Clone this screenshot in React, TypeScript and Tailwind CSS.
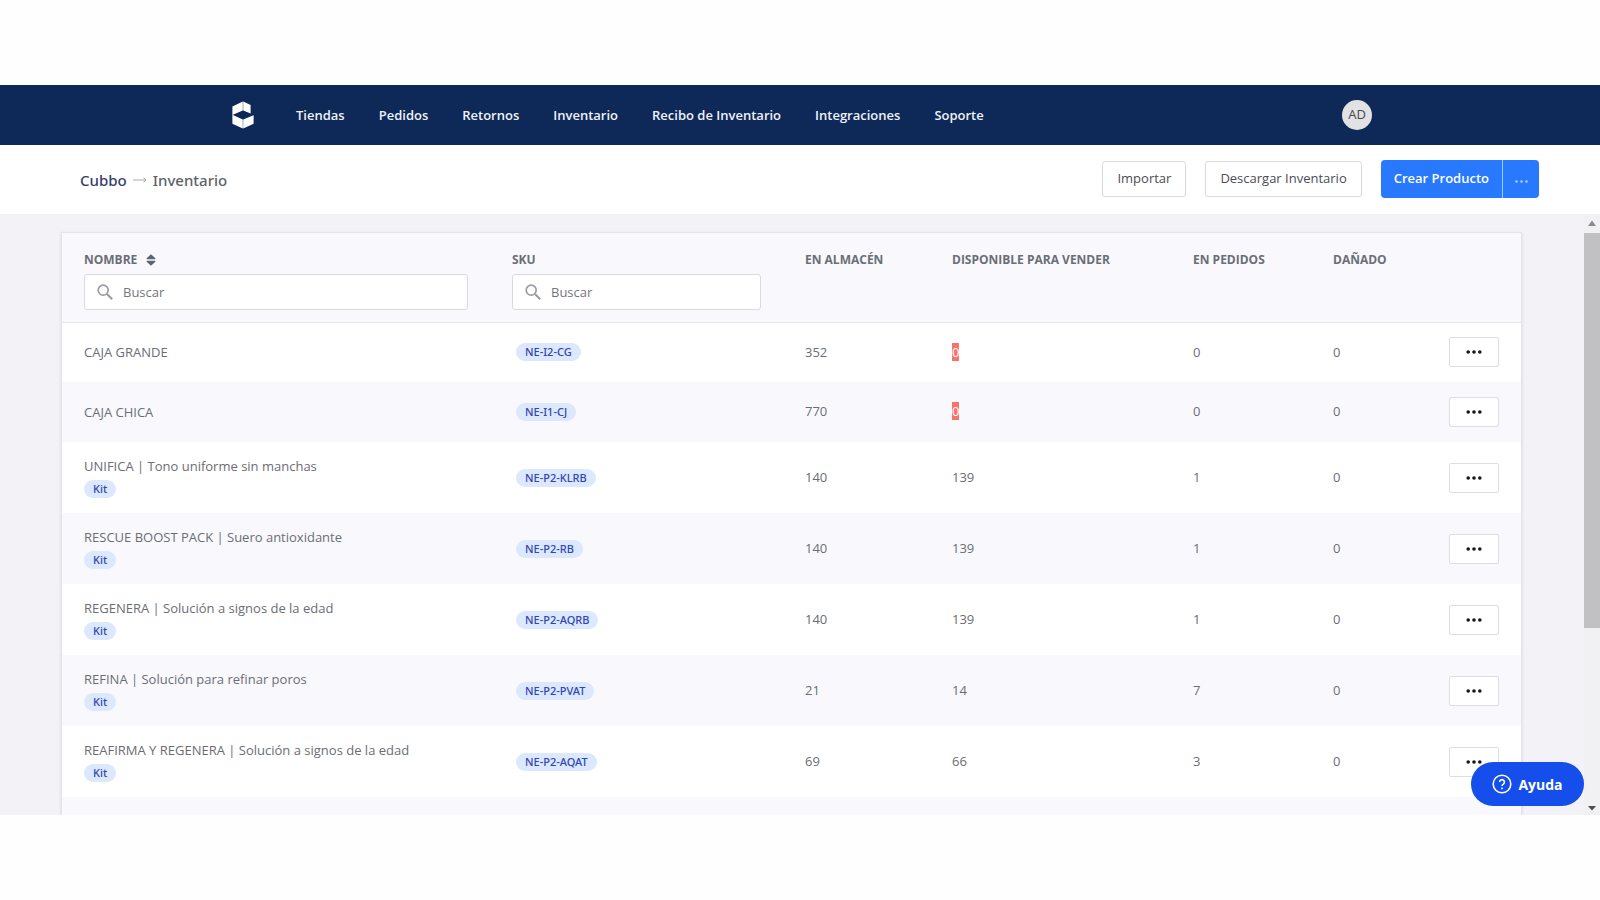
import { useState } from "react";

type Product = {
  name: string;
  kit?: boolean;
  sku: string;
  stock: number;
  available: number;
  orders: number;
  damaged: number;
};

const NAV = [
  "Tiendas",
  "Pedidos",
  "Retornos",
  "Inventario",
  "Recibo de Inventario",
  "Integraciones",
  "Soporte",
];

const PRODUCTS: Product[] = [
  { name: "CAJA GRANDE", sku: "NE-I2-CG", stock: 352, available: 0, orders: 0, damaged: 0 },
  { name: "CAJA CHICA", sku: "NE-I1-CJ", stock: 770, available: 0, orders: 0, damaged: 0 },
  { name: "UNIFICA | Tono uniforme sin manchas", kit: true, sku: "NE-P2-KLRB", stock: 140, available: 139, orders: 1, damaged: 0 },
  { name: "RESCUE BOOST PACK | Suero antioxidante", kit: true, sku: "NE-P2-RB", stock: 140, available: 139, orders: 1, damaged: 0 },
  { name: "REGENERA | Solución a signos de la edad", kit: true, sku: "NE-P2-AQRB", stock: 140, available: 139, orders: 1, damaged: 0 },
  { name: "REFINA | Solución para refinar poros", kit: true, sku: "NE-P2-PVAT", stock: 21, available: 14, orders: 7, damaged: 0 },
  { name: "REAFIRMA Y REGENERA | Solución a signos de la edad", kit: true, sku: "NE-P2-AQAT", stock: 69, available: 66, orders: 3, damaged: 0 },
];

function Logo() {
  return (
    <svg viewBox="0 0 22 28" className="h-7 w-[22px]" fill="#fff" aria-hidden="true">
      <path d="M10.8 0.4v9L0.4 14V5.4z" />
      <path d="M11.2 0.4 18.6 4v8.6L11.2 9.4z" />
      <path d="M0.4 13.8 10.8 18.6v9L0.4 22.8z" />
      <path d="M11.2 18.6 21.6 14.2v8.6l-10.4 4.8z" />
    </svg>
  );
}

function SortIcon() {
  return (
    <svg viewBox="0 0 10 12" className="h-3 w-[10px]" fill="#5f6570" aria-hidden="true">
      <path d="M5 0.3 9.4 4.3q.4.9-.6.9H1.2q-1 0-.6-.9z" />
      <path d="M5 11.7 9.4 7.7q.4-.9-.6-.9H1.2q-1 0-.6.9z" />
    </svg>
  );
}

function SearchField({ label }: { label: string }) {
  const [value, setValue] = useState("");
  return (
    <label className="flex h-9 items-center gap-[10px] rounded-[3px] border border-[#d9d9e0] bg-white px-3 font-normal">
      <svg viewBox="0 0 16 16" className="size-4 shrink-0" fill="none" stroke="#9a9ba3" strokeWidth="1.7" aria-hidden="true">
        <circle cx="6.2" cy="6.2" r="5" />
        <path d="M10 10l5.2 5.2" strokeWidth="2" />
      </svg>
      <input
        aria-label={label}
        placeholder="Buscar"
        value={value}
        onChange={(e) => setValue(e.target.value)}
        className="w-full min-w-0 bg-transparent text-[13px] leading-5 text-[#5f6066] outline-none placeholder:text-[#75767d]"
      />
    </label>
  );
}

function Tag({ children }: { children: string }) {
  return (
    <span className="inline-block rounded-full bg-[#dce8fd] px-[9px] font-['Noto_Sans',sans-serif] text-[11px] leading-[18px] font-medium text-[#2f45b5]">
      {children}
    </span>
  );
}

function Row({ product }: { product: Product }) {
  return (
    <tr className={`even:bg-[#f9f9fd] ${product.kit ? "h-[71px]" : "h-[60px]"}`}>
      <td className={product.kit ? "px-[22px] pb-0.5" : "px-[22px]"}>
        <div className="leading-5">{product.name}</div>
        {product.kit && (
          <div className="mt-1 flex">
            <Tag>Kit</Tag>
          </div>
        )}
      </td>
      <td className="px-[26px]">
        <div className="flex">
          <Tag>{product.sku}</Tag>
        </div>
      </td>
      <td className="px-[22px]">{product.stock}</td>
      <td className="px-[22px]">
        {product.available === 0 ? (
          <span className="bg-[#f9736b] text-white">0</span>
        ) : (
          product.available
        )}
      </td>
      <td className="px-[22px]">{product.orders}</td>
      <td className="px-[22px]">{product.damaged}</td>
      <td className="px-[22px]">
        <button
          type="button"
          aria-label={`Acciones de ${product.name}`}
          className="flex h-[30px] w-[50px] items-center justify-center rounded-[2px] border border-[#dddde3] bg-white"
        >
          <svg viewBox="0 0 16 4" className="h-1 w-4" fill="#15151b" aria-hidden="true">
            <circle cx="2.2" cy="2" r="1.8" />
            <circle cx="8" cy="2" r="1.8" />
            <circle cx="13.8" cy="2" r="1.8" />
          </svg>
        </button>
      </td>
    </tr>
  );
}

export default function App() {
  return (
    <div className="flex h-screen flex-col bg-[#fefefe] py-[85px] font-['Open_Sans','Noto_Sans',sans-serif] text-[13px] text-[#6b6d75]">
      <header className="flex h-[60px] shrink-0 items-center bg-[#0e2857]">
        <div className="mx-auto flex w-full max-w-[1144px] items-center pl-1">
          <a href="#inicio" aria-label="Cubbo">
            <Logo />
          </a>
          <nav className="ml-[42px] flex gap-[34px] text-[13px] leading-5 font-semibold text-[#eef2fa]">
            {NAV.map((item) => (
              <a key={item} href="#seccion">
                {item}
              </a>
            ))}
          </nav>
          <button
            type="button"
            className="ml-auto flex size-[30px] items-center justify-center rounded-full bg-[#e2e2e4] text-[13px] text-[#46474c]"
          >
            AD
          </button>
        </div>
      </header>

      <div className="flex h-[69px] shrink-0 items-center justify-between bg-white pr-[61px] pb-px pl-20">
        <h1 className="flex items-center gap-1.5 pt-0.5 font-['Noto_Sans',sans-serif] text-[15px] font-medium">
          <a href="#cubbo" className="text-[#35416f]">
            Cubbo
          </a>
          <svg viewBox="0 0 14 6" className="h-1.5 w-3.5" fill="none" stroke="#a9aab2" aria-hidden="true">
            <path d="M0 3h13M10.5 0.8 13 3 10.5 5.2" />
          </svg>
          <span className="text-[#5f6268]">Inventario</span>
        </h1>
        <div className="flex items-center text-[13px] font-medium text-[#4b4c55]">
          <button type="button" className="h-9 rounded-[3px] border border-[#d9d9df] bg-white px-[14px]">
            Importar
          </button>
          <button type="button" className="ml-[19px] h-9 rounded-[3px] border border-[#d9d9df] bg-white px-[14px]">
            Descargar Inventario
          </button>
          <div className="ml-[19px] flex h-[38px] overflow-hidden rounded-[4px] bg-[#2979ff] text-white">
            <button type="button" className="px-[13px] font-semibold">
              Crear Producto
            </button>
            <button
              type="button"
              aria-label="Más opciones"
              className="flex w-[37px] items-center justify-center border-l border-[#8fd0ff]"
            >
              <svg viewBox="0 0 13 3" className="mt-1 h-[3px] w-[13px]" fill="#9fd2ff" aria-hidden="true">
                <circle cx="1.5" cy="1.5" r="1.3" />
                <circle cx="6.5" cy="1.5" r="1.3" />
                <circle cx="11.5" cy="1.5" r="1.3" />
              </svg>
            </button>
          </div>
        </div>
      </div>

      <main className="flex min-h-0 flex-1 bg-[#f3f2f6]">
        <div className="min-w-0 flex-1 overflow-hidden pt-[18px] pr-[62px] pl-[61px]">
          <div className="border border-[#e4e4ea] bg-white shadow-sm">
            <table className="w-full table-fixed border-collapse text-left">
              <colgroup>
                <col />
                <col className="w-[293px]" />
                <col className="w-[147px]" />
                <col className="w-[241px]" />
                <col className="w-[140px]" />
                <col className="w-[116px]" />
                <col className="w-[94px]" />
              </colgroup>
              <thead className="border-b border-[#e4e4ea] bg-[#f9f9fd] text-[12px] leading-4 font-bold text-[#6b6e76]">
                <tr className="h-[89px] align-top">
                  <th className="px-[22px] pt-[19px]">
                    <div className="mb-1.5 flex items-center gap-[9px]">
                      NOMBRE <SortIcon />
                    </div>
                    <SearchField label="Buscar por nombre" />
                  </th>
                  <th className="px-[22px] pt-[19px]">
                    <div className="mb-1.5">SKU</div>
                    <SearchField label="Buscar por SKU" />
                  </th>
                  <th className="px-[22px] pt-[19px]">EN ALMACÉN</th>
                  <th className="px-[22px] pt-[19px]">DISPONIBLE PARA VENDER</th>
                  <th className="px-[22px] pt-[19px]">EN PEDIDOS</th>
                  <th className="px-[22px] pt-[19px]">DAÑADO</th>
                  <th aria-label="Acciones" />
                </tr>
              </thead>
              <tbody>
                {PRODUCTS.map((product) => (
                  <Row key={product.sku} product={product} />
                ))}
                <tr className="h-[71px] bg-[#f9f9fd]">
                  <td colSpan={7} />
                </tr>
              </tbody>
            </table>
          </div>
        </div>

        <div className="flex w-4 flex-col bg-[#f1f1f3]" aria-hidden="true">
          <svg viewBox="0 0 16 19" className="h-[19px] w-4" fill="#8b8b8f">
            <path d="M8 6.5 12 12H4z" />
          </svg>
          <div className="h-[395px] bg-[#c1c1c4]" />
          <svg viewBox="0 0 16 16" className="mt-auto h-4 w-4" fill="#4b4b4f">
            <path d="M8 11.5 12 7H4z" />
          </svg>
        </div>
      </main>

      <button
        type="button"
        className="fixed right-4 bottom-[94px] flex h-11 w-[113px] items-center justify-center gap-1.5 rounded-full bg-[#154eea] text-[14px] font-bold text-white"
      >
        <svg viewBox="0 0 20 20" className="size-5" fill="none" stroke="#fff" strokeWidth="1.6" aria-hidden="true">
          <circle cx="10" cy="10" r="8.8" />
          <path d="M7.6 8.1a2.4 2.4 0 1 1 3.7 2c-.9.6-1.3 1-1.3 1.9" />
          <path d="M10 13.6v1.6" />
        </svg>
        Ayuda
      </button>
    </div>
  );
}
